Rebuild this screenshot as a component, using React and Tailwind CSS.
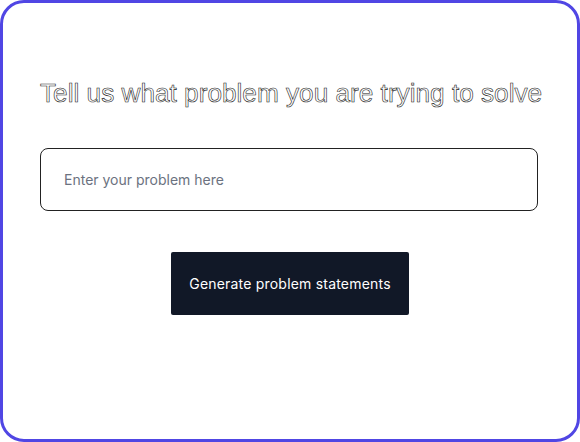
import React, { useState } from 'react';

const App = () => {
    const [problem, setProblem] = useState('');

    return (
        <div className="w-[580px] h-[442px] bg-white">
            <div className="h-full w-full rounded-[24px] border-[3px] border-[#5046e4] bg-white px-[37px] pt-[74px]">
                {/* Heading */}
                <h1 className="text-center text-[26.2px] leading-[32px] text-white [-webkit-text-stroke:0.6px_#222] font-['Liberation_Sans',Arial,sans-serif] whitespace-nowrap">
                    Tell us what problem you are trying to solve
                </h1>

                {/* Input */}
                <input
                    type="text"
                    value={problem}
                    onChange={(e) => setProblem(e.target.value)}
                    placeholder="Enter your problem here"
                    className="mt-[39px] block h-[63px] w-[498px] rounded-lg border border-[#222] bg-white pl-[23px] pr-6 text-[14px] text-gray-800 placeholder:text-[#6b7280] outline-none font-['Inter',sans-serif]"
                />

                {/* Button */}
                <div className="mt-[41px] flex justify-center">
                    <button
                        type="button"
                        className="h-[63px] w-[238px] rounded-[2px] bg-[#111827] text-[14px] font-normal tracking-[0.2px] text-white font-['Inter',sans-serif]"
                    >
                        Generate problem statements
                    </button>
                </div>
            </div>
        </div>
    );
};

export default App;
